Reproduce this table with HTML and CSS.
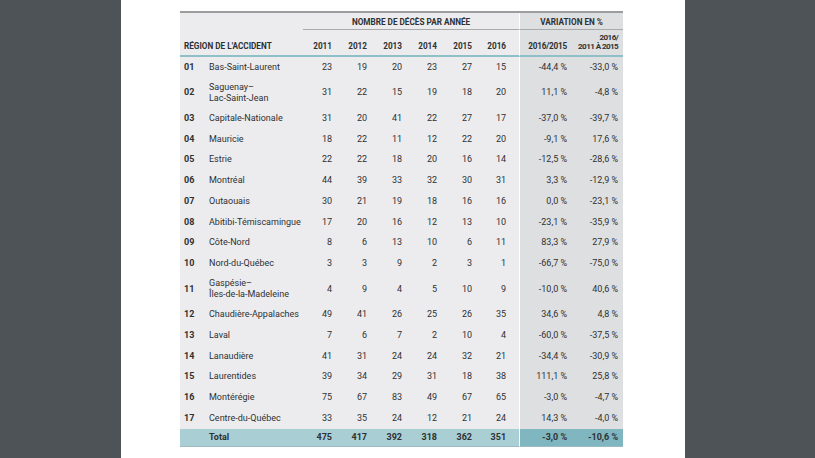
FILE: index.html
```html
<!DOCTYPE html>
<html lang="fr">
<head>
<meta charset="utf-8">
<title>Nombre de décès par année</title>
<link rel="stylesheet" href="styles.css">
</head>
<body>
<div class="page">
<table class="stats">
  <colgroup>
    <col class="c-code"><col class="c-name"><col class="c-y1"><col class="c-y"><col class="c-y"><col class="c-y"><col class="c-y"><col class="c-y6"><col class="c-v"><col class="c-v">
  </colgroup>
  <thead>
    <tr class="h1">
      <th colspan="2" class="blank"></th>
      <th colspan="6" class="group">NOMBRE DE DÉCÈS PAR ANNÉE</th>
      <th colspan="2" class="group var sep">VARIATION EN %</th>
    </tr>
    <tr class="h2">
      <th colspan="2" class="region">RÉGION DE L'ACCIDENT</th>
      <th class="yr">2011</th><th class="yr">2012</th><th class="yr">2013</th><th class="yr">2014</th><th class="yr">2015</th><th class="yr">2016</th>
      <th class="vr var sep">2016/2015</th>
      <th class="vr var vr2">2016/<br>2011 À 2015</th>
    </tr>
  </thead>
  <tbody>
    <tr><td class="code">01</td><td class="name">Bas-Saint-Laurent</td><td class="n">23</td><td class="n">19</td><td class="n">20</td><td class="n">23</td><td class="n">27</td><td class="n">15</td><td class="p var sep">-44,4 %</td><td class="p var p2">-33,0 %</td></tr>
    <tr class="dbl"><td class="code">02</td><td class="name">Saguenay–<br>Lac-Saint-Jean</td><td class="n">31</td><td class="n">22</td><td class="n">15</td><td class="n">19</td><td class="n">18</td><td class="n">20</td><td class="p var sep">11,1 %</td><td class="p var p2">-4,8 %</td></tr>
    <tr><td class="code">03</td><td class="name">Capitale-Nationale</td><td class="n">31</td><td class="n">20</td><td class="n">41</td><td class="n">22</td><td class="n">27</td><td class="n">17</td><td class="p var sep">-37,0 %</td><td class="p var p2">-39,7 %</td></tr>
    <tr><td class="code">04</td><td class="name">Mauricie</td><td class="n">18</td><td class="n">22</td><td class="n">11</td><td class="n">12</td><td class="n">22</td><td class="n">20</td><td class="p var sep">-9,1 %</td><td class="p var p2">17,6 %</td></tr>
    <tr><td class="code">05</td><td class="name">Estrie</td><td class="n">22</td><td class="n">22</td><td class="n">18</td><td class="n">20</td><td class="n">16</td><td class="n">14</td><td class="p var sep">-12,5 %</td><td class="p var p2">-28,6 %</td></tr>
    <tr><td class="code">06</td><td class="name">Montréal</td><td class="n">44</td><td class="n">39</td><td class="n">33</td><td class="n">32</td><td class="n">30</td><td class="n">31</td><td class="p var sep">3,3 %</td><td class="p var p2">-12,9 %</td></tr>
    <tr><td class="code">07</td><td class="name">Outaouais</td><td class="n">30</td><td class="n">21</td><td class="n">19</td><td class="n">18</td><td class="n">16</td><td class="n">16</td><td class="p var sep">0,0 %</td><td class="p var p2">-23,1 %</td></tr>
    <tr><td class="code">08</td><td class="name">Abitibi-Témiscamingue</td><td class="n">17</td><td class="n">20</td><td class="n">16</td><td class="n">12</td><td class="n">13</td><td class="n">10</td><td class="p var sep">-23,1 %</td><td class="p var p2">-35,9 %</td></tr>
    <tr><td class="code">09</td><td class="name">Côte-Nord</td><td class="n">8</td><td class="n">6</td><td class="n">13</td><td class="n">10</td><td class="n">6</td><td class="n">11</td><td class="p var sep">83,3 %</td><td class="p var p2">27,9 %</td></tr>
    <tr><td class="code">10</td><td class="name">Nord-du-Québec</td><td class="n">3</td><td class="n">3</td><td class="n">9</td><td class="n">2</td><td class="n">3</td><td class="n">1</td><td class="p var sep">-66,7 %</td><td class="p var p2">-75,0 %</td></tr>
    <tr class="dbl"><td class="code">11</td><td class="name">Gaspésie–<br>Îles-de-la-Madeleine</td><td class="n">4</td><td class="n">9</td><td class="n">4</td><td class="n">5</td><td class="n">10</td><td class="n">9</td><td class="p var sep">-10,0 %</td><td class="p var p2">40,6 %</td></tr>
    <tr><td class="code">12</td><td class="name">Chaudière-Appalaches</td><td class="n">49</td><td class="n">41</td><td class="n">26</td><td class="n">25</td><td class="n">26</td><td class="n">35</td><td class="p var sep">34,6 %</td><td class="p var p2">4,8 %</td></tr>
    <tr><td class="code">13</td><td class="name">Laval</td><td class="n">7</td><td class="n">6</td><td class="n">7</td><td class="n">2</td><td class="n">10</td><td class="n">4</td><td class="p var sep">-60,0 %</td><td class="p var p2">-37,5 %</td></tr>
    <tr><td class="code">14</td><td class="name">Lanaudière</td><td class="n">41</td><td class="n">31</td><td class="n">24</td><td class="n">24</td><td class="n">32</td><td class="n">21</td><td class="p var sep">-34,4 %</td><td class="p var p2">-30,9 %</td></tr>
    <tr><td class="code">15</td><td class="name">Laurentides</td><td class="n">39</td><td class="n">34</td><td class="n">29</td><td class="n">31</td><td class="n">18</td><td class="n">38</td><td class="p var sep">111,1 %</td><td class="p var p2">25,8 %</td></tr>
    <tr><td class="code">16</td><td class="name">Montérégie</td><td class="n">75</td><td class="n">67</td><td class="n">83</td><td class="n">49</td><td class="n">67</td><td class="n">65</td><td class="p var sep">-3,0 %</td><td class="p var p2">-4,7 %</td></tr>
    <tr><td class="code">17</td><td class="name">Centre-du-Québec</td><td class="n">33</td><td class="n">35</td><td class="n">24</td><td class="n">12</td><td class="n">21</td><td class="n">24</td><td class="p var sep">14,3 %</td><td class="p var p2">-4,0 %</td></tr>
  </tbody>
  <tfoot>
    <tr class="total"><td class="code"></td><td class="name">Total</td><td class="n">475</td><td class="n">417</td><td class="n">392</td><td class="n">318</td><td class="n">362</td><td class="n">351</td><td class="p var sep">-3,0 %</td><td class="p var p2">-10,6 %</td></tr>
  </tfoot>
</table>
</div>
</body>
</html>
```

FILE: styles.css
```css
html, body {
  margin: 0;
  padding: 0;
}
body {
  background: #4e5357;
  width: 815px;
  height: 458px;
  overflow: hidden;
  font-family: Roboto, "Liberation Sans", sans-serif;
  color: #2e3133;
}
.page {
  margin-left: 121px;
  width: 564px;
  height: 458px;
  background: #ffffff;
  padding: 11px 0 0 59px;
  box-sizing: border-box;
}
.stats {
  width: 443px;
  table-layout: fixed;
  border-collapse: separate;
  border-spacing: 0;
  border-top: 2px solid #9d9d9d;
  font-size: 9px;
}
.c-code { width: 25px; }
.c-name { width: 98px; }
.c-y1 { width: 42px; }
.c-y { width: 35px; }
.c-y6 { width: 34px; }
.c-v { width: 52px; }

.stats th, .stats td {
  padding: 0;
  background: #ececee;
  white-space: nowrap;
}
.stats .var {
  background: #dedfe1;
}
.stats .sep {
  border-left: 1px solid #ffffff;
}

.h1 th {
  height: 15px;
  font-size: 8.2px;
  font-weight: 700;
  vertical-align: middle;
  text-align: center;
  padding-top: 1px;
}
.h1 .group {
  border-bottom: 1px solid #a8aaac;
}
.h2 th {
  height: 21px;
  font-size: 8.2px;
  font-weight: 700;
  line-height: 9px;
  vertical-align: bottom;
  padding-bottom: 4px;
  border-bottom: 2px solid #8fbfc7;
}
.h2 .region {
  text-align: left;
  padding-left: 4px;
}
.h2 .yr {
  text-align: right;
  padding-right: 13px;
}
.h2 .vr {
  text-align: right;
  padding-right: 4px;
  letter-spacing: -0.2px;
}
.h2 .vr2 {
  padding-right: 5px;
  font-size: 8.1px;
  letter-spacing: -0.6px;
}

.stats tbody tr {
  height: 20.75px;
}
.stats tbody tr.dbl {
  height: 30.25px;
}
.stats td {
  vertical-align: middle;
  line-height: 11px;
}
.stats .code {
  font-weight: 700;
  padding-left: 4px;
}
.stats .name {
  padding-left: 4px;
}
.stats .n {
  text-align: right;
  padding-right: 13px;
}
.stats .p {
  text-align: right;
  padding-right: 4px;
}
.stats .p2 {
  padding-right: 5px;
}

.total td {
  height: 17px;
  background: #a9ced4;
  font-weight: 700;
  border-bottom: 1px solid #9bbcc2;
}
.total td.var {
  background: #80b6c0;
}
```
